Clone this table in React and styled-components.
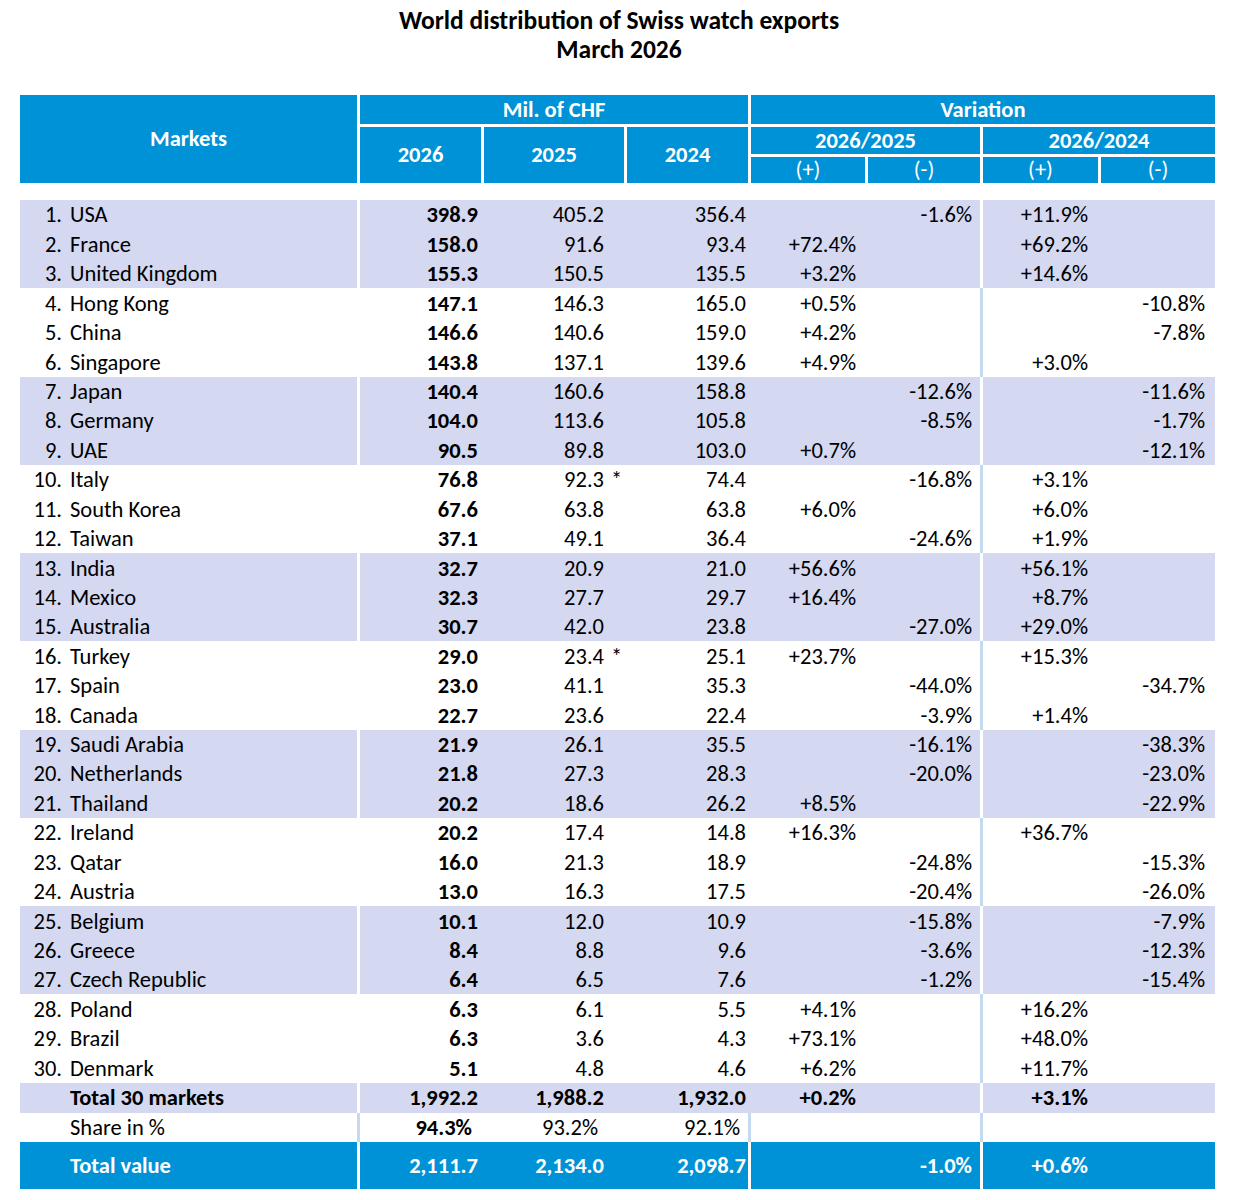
import React from 'react'
import styled, { createGlobalStyle } from 'styled-components'

const BLUE = '#0092d6'
const BAND = '#d4d8f1'
const LINE = '#c5d9f1'

const TRACKS = '337px 3px 121px 3px 140px 3px 121px 3px 114px 3px 112px 3px 115px 3px 114px'

const GlobalStyle = createGlobalStyle`
  body {
    margin: 0;
    background: #fff;
    font-family: "Carlito", "Lato", sans-serif;
    color: #000;
  }
`

const Page = styled.div`
  width: 1238px;
  padding-top: 6px;
`

const Title = styled.h1`
  margin: 0;
  text-align: center;
  font-size: 25.5px;
  line-height: 29px;
  font-weight: 700;
`

const Table = styled.div`
  margin: 31px 0 0 20px;
  width: 1195px;
`

const Head = styled.div`
  display: grid;
  grid-template-columns: 337px 121px 140px 121px 114px 112px 115px 114px;
  grid-template-rows: 29px 27px 26px;
  gap: 3px;
  margin-bottom: 17px;
`

const HeadCell = styled.div`
  grid-column: ${p => p.col};
  grid-row: ${p => p.row};
  background: ${BLUE};
  color: #fff;
  font-size: 22.5px;
  line-height: 1;
  padding-top: 1px;
  font-weight: ${p => (p.light ? 400 : 700)};
  display: flex;
  align-items: center;
  justify-content: center;
`

const Row = styled.div`
  display: grid;
  grid-template-columns: ${TRACKS};
  height: ${p => p.h}px;
  background: ${p => p.bg};
  color: ${p => p.fg || '#000'};
  font-size: 22.5px;
  line-height: 1;
`

const Sep = styled.div`
  background: ${p => p.color || 'transparent'};
`

const Market = styled.div`
  display: flex;
  align-items: center;
  padding-top: 2px;
  font-weight: ${p => (p.bold ? 700 : 400)};
`

const Rank = styled.span`
  width: 42px;
  text-align: right;
`

const Name = styled.span`
  margin-left: ${p => (p.solo ? 50 : 8)}px;
`

const Cell = styled.div`
  display: flex;
  align-items: center;
  justify-content: flex-end;
  padding-top: 2px;
  padding-right: ${p => p.pr}px;
  font-weight: ${p => (p.bold ? 700 : 400)};
  white-space: nowrap;
`

const Note = styled.span`
  width: ${p => p.w}px;
  padding-left: 7px;
  box-sizing: border-box;
`

const rows = [
  [1, 'USA', '398.9', '405.2', '356.4', '', '-1.6%', '+11.9%', ''],
  [2, 'France', '158.0', '91.6', '93.4', '+72.4%', '', '+69.2%', ''],
  [3, 'United Kingdom', '155.3', '150.5', '135.5', '+3.2%', '', '+14.6%', ''],
  [4, 'Hong Kong', '147.1', '146.3', '165.0', '+0.5%', '', '', '-10.8%'],
  [5, 'China', '146.6', '140.6', '159.0', '+4.2%', '', '', '-7.8%'],
  [6, 'Singapore', '143.8', '137.1', '139.6', '+4.9%', '', '+3.0%', ''],
  [7, 'Japan', '140.4', '160.6', '158.8', '', '-12.6%', '', '-11.6%'],
  [8, 'Germany', '104.0', '113.6', '105.8', '', '-8.5%', '', '-1.7%'],
  [9, 'UAE', '90.5', '89.8', '103.0', '+0.7%', '', '', '-12.1%'],
  [10, 'Italy', '76.8', '92.3*', '74.4', '', '-16.8%', '+3.1%', ''],
  [11, 'South Korea', '67.6', '63.8', '63.8', '+6.0%', '', '+6.0%', ''],
  [12, 'Taiwan', '37.1', '49.1', '36.4', '', '-24.6%', '+1.9%', ''],
  [13, 'India', '32.7', '20.9', '21.0', '+56.6%', '', '+56.1%', ''],
  [14, 'Mexico', '32.3', '27.7', '29.7', '+16.4%', '', '+8.7%', ''],
  [15, 'Australia', '30.7', '42.0', '23.8', '', '-27.0%', '+29.0%', ''],
  [16, 'Turkey', '29.0', '23.4*', '25.1', '+23.7%', '', '+15.3%', ''],
  [17, 'Spain', '23.0', '41.1', '35.3', '', '-44.0%', '', '-34.7%'],
  [18, 'Canada', '22.7', '23.6', '22.4', '', '-3.9%', '+1.4%', ''],
  [19, 'Saudi Arabia', '21.9', '26.1', '35.5', '', '-16.1%', '', '-38.3%'],
  [20, 'Netherlands', '21.8', '27.3', '28.3', '', '-20.0%', '', '-23.0%'],
  [21, 'Thailand', '20.2', '18.6', '26.2', '+8.5%', '', '', '-22.9%'],
  [22, 'Ireland', '20.2', '17.4', '14.8', '+16.3%', '', '+36.7%', ''],
  [23, 'Qatar', '16.0', '21.3', '18.9', '', '-24.8%', '', '-15.3%'],
  [24, 'Austria', '13.0', '16.3', '17.5', '', '-20.4%', '', '-26.0%'],
  [25, 'Belgium', '10.1', '12.0', '10.9', '', '-15.8%', '', '-7.9%'],
  [26, 'Greece', '8.4', '8.8', '9.6', '', '-3.6%', '', '-12.3%'],
  [27, 'Czech Republic', '6.4', '6.5', '7.6', '', '-1.2%', '', '-15.4%'],
  [28, 'Poland', '6.3', '6.1', '5.5', '+4.1%', '', '+16.2%', ''],
  [29, 'Brazil', '6.3', '3.6', '4.3', '+73.1%', '', '+48.0%', ''],
  [30, 'Denmark', '5.1', '4.8', '4.6', '+6.2%', '', '+11.7%', ''],
]

// padding-right of each value column
const PADS = [3, 0, 2, 9, 8, 10, 10]

function DataRow({ h, bg, fg, seps, rank, name, values, boldAll, boldFirst, extraPad = 0 }) {
  const [v26, v25, v24, a, b, c, d] = values
  const star = v25.endsWith('*')
  return (
    <Row h={h} bg={bg} fg={fg}>
      <Market bold={boldAll}>
        {rank ? <Rank>{rank}.</Rank> : null}
        <Name solo={!rank}>{name}</Name>
      </Market>
      <Sep color={seps[0]} />
      <Cell pr={PADS[0] + extraPad} bold={boldAll || boldFirst}>{v26}</Cell>
      <Sep />
      <Cell pr={PADS[1]} bold={boldAll}>
        {star ? v25.slice(0, -1) : v25}
        <Note w={20 + extraPad}>{star ? '*' : ''}</Note>
      </Cell>
      <Sep />
      <Cell pr={PADS[2] + extraPad} bold={boldAll}>{v24}</Cell>
      <Sep color={seps[1]} />
      <Cell pr={PADS[3]} bold={boldAll}>{a}</Cell>
      <Sep />
      <Cell pr={PADS[4]} bold={boldAll}>{b}</Cell>
      <Sep color={seps[2]} />
      <Cell pr={PADS[5]} bold={boldAll}>{c}</Cell>
      <Sep />
      <Cell pr={PADS[6]} bold={boldAll}>{d}</Cell>
    </Row>
  )
}

export default function App() {
  return (
    <Page>
      <GlobalStyle />
      <Title>
        World distribution of Swiss watch exports
        <br />
        March 2026
      </Title>
      <Table>
        <Head>
          <HeadCell col="1" row="1 / 4">Markets</HeadCell>
          <HeadCell col="2 / 5" row="1">Mil. of CHF</HeadCell>
          <HeadCell col="5 / 9" row="1">Variation</HeadCell>
          <HeadCell col="2" row="2 / 4">2026</HeadCell>
          <HeadCell col="3" row="2 / 4">2025</HeadCell>
          <HeadCell col="4" row="2 / 4">2024</HeadCell>
          <HeadCell col="5 / 7" row="2">2026/2025</HeadCell>
          <HeadCell col="7 / 9" row="2">2026/2024</HeadCell>
          <HeadCell col="5" row="3" light>(+)</HeadCell>
          <HeadCell col="6" row="3" light>(-)</HeadCell>
          <HeadCell col="7" row="3" light>(+)</HeadCell>
          <HeadCell col="8" row="3" light>(-)</HeadCell>
        </Head>

        {rows.map((r, i) => {
          const shaded = Math.floor(i / 3) % 2 === 0
          return (
            <DataRow
              key={r[0]}
              h={29.43}
              bg={shaded ? BAND : '#fff'}
              seps={shaded ? ['#fff', null, '#fff'] : [null, null, LINE]}
              rank={r[0]}
              name={r[1]}
              values={r.slice(2)}
              boldFirst
            />
          )
        })}

        <DataRow
          h={30}
          bg={BAND}
          seps={['#fff', null, '#fff']}
          name="Total 30 markets"
          values={['1,992.2', '1,988.2', '1,932.0', '+0.2%', '', '+3.1%', '']}
          boldAll
        />
        <DataRow
          h={29}
          bg="#fff"
          seps={[LINE, LINE, LINE]}
          name="Share in %"
          values={['94.3%', '93.2%', '92.1%', '', '', '', '']}
          boldFirst
          extraPad={6}
        />
        <DataRow
          h={47}
          bg={BLUE}
          fg="#fff"
          seps={['#fff', '#fff', '#fff']}
          name="Total value"
          values={['2,111.7', '2,134.0', '2,098.7', '', '-1.0%', '+0.6%', '']}
          boldAll
        />
      </Table>
    </Page>
  )
}
